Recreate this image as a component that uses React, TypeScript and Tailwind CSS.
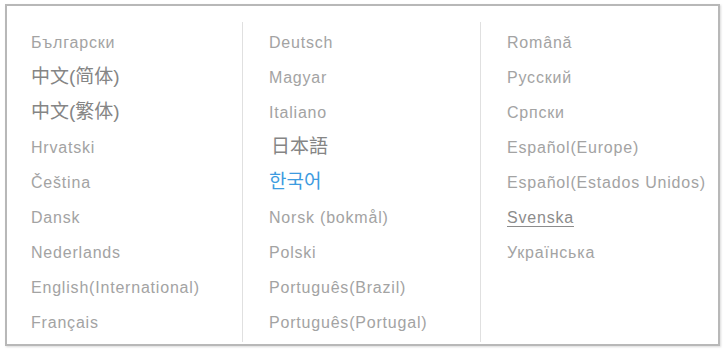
import { Fragment } from 'react';

const columns: { label: string; kind?: 'cjk' | 'ko' | 'ja' | 'link' }[][] = [
  [
    { label: 'Български' },
    { label: '中文(简体)', kind: 'cjk' },
    { label: '中文(繁体)', kind: 'cjk' },
    { label: 'Hrvatski' },
    { label: 'Čeština' },
    { label: 'Dansk' },
    { label: 'Nederlands' },
    { label: 'English(International)' },
    { label: 'Français' },
  ],
  [
    { label: 'Deutsch' },
    { label: 'Magyar' },
    { label: 'Italiano' },
    { label: '日本語', kind: 'ja' },
    { label: '한국어', kind: 'ko' },
    { label: 'Norsk (bokmål)' },
    { label: 'Polski' },
    { label: 'Português(Brazil)' },
    { label: 'Português(Portugal)' },
  ],
  [
    { label: 'Română' },
    { label: 'Русский' },
    { label: 'Српски' },
    { label: 'Español(Europe)' },
    { label: 'Español(Estados Unidos)' },
    { label: 'Svenska', kind: 'link' },
    { label: 'Українська' },
  ],
];

function itemClass(kind?: string) {
  if (kind === 'cjk') return 'text-[19px] text-[#858585] tracking-normal';
  if (kind === 'ja') return 'text-[19px] text-[#858585] tracking-normal pl-[2px]';
  if (kind === 'ko') return 'text-[19px] text-[#3d9be0] tracking-normal';
  if (kind === 'link') return 'text-[16px] text-[#8c8c8c] underline underline-offset-[3px] tracking-[0.8px]';
  return 'text-[16px] text-[#a3a3a3] tracking-[0.8px]';
}

export default function App() {
  return (
    <div className="w-[723px] h-[351px] bg-white pt-[4px] pl-[5px]">
      <div
        className="w-[715px] h-[342px] border-[2px] border-[#b8b8b8] bg-white flex shadow-[1px_1px_2px_rgba(0,0,0,0.15)]"
        style={{ fontFamily: '"Liberation Sans", Arial, "Noto Sans CJK SC", "Noto Sans CJK KR", sans-serif' }}
      >
        {columns.map((col, i) => (
          <Fragment key={i}>
            {i > 0 && <div className="w-px bg-[#e0e0e0] mt-[16px] mb-[2px]" />}
            <div className={'flex-1 flex flex-col pt-[19px] ' + (i === 0 ? 'pl-[24px]' : 'pl-[26px]')}>
              {col.map((item) => (
                <div
                  key={item.label}
                  className={'h-[35px] shrink-0 flex items-center whitespace-nowrap ' + itemClass(item.kind)}
                >
                  {item.label}
                </div>
              ))}
            </div>
          </Fragment>
        ))}
      </div>
    </div>
  );
}
